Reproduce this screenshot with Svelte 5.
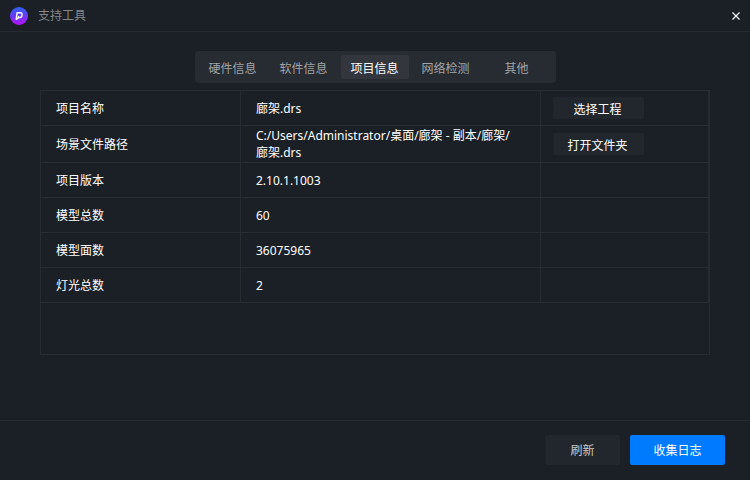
<script>
	const tabs = ["硬件信息", "软件信息", "项目信息", "网络检测", "其他"];

	const rows = [
		{ name: "项目名称", value: "廊架.drs", action: "选择工程" },
		{ name: "场景文件路径", value: "C:/Users/Administrator/桌面/廊架 - 副本/廊架/廊架.drs", action: "打开文件夹" },
		{ name: "项目版本", value: "2.10.1.1003" },
		{ name: "模型总数", value: "60" },
		{ name: "模型面数", value: "36075965" },
		{ name: "灯光总数", value: "2" }
	];

	let activeTab = $state(2);
</script>

<div class="window">
	<header>
		<svg class="logo" viewBox="0 0 18 18" aria-hidden="true">
			<defs>
				<linearGradient id="logoFill" x1="0" y1="0" x2="0" y2="1">
					<stop offset="0" stop-color="#2b62f2" />
					<stop offset="0.5" stop-color="#6a3af5" />
					<stop offset="1" stop-color="#b414fa" />
				</linearGradient>
			</defs>
			<circle cx="9" cy="9" r="9" fill="url(#logoFill)" />
			<path d="M8.6 9V10.6H10Q11.5 10.5 11.8 9L12.1 7.4Q12.2 5.9 10.7 5.8H7.1L6.2 12.3L8.4 10.8" fill="none" stroke="#fff" stroke-width="1.4" stroke-linejoin="round" />
		</svg>
		<h1>支持工具</h1>
		<button class="close" aria-label="关闭">
			<svg viewBox="0 0 8 8" aria-hidden="true">
				<path d="M.5.5l7 7M7.5.5l-7 7" fill="none" stroke="#fff" stroke-width="1.2" />
			</svg>
		</button>
	</header>

	<main>
		<div class="tabs" role="tablist">
			{#each tabs as tab, i}
				<button role="tab" aria-selected={activeTab === i} class:active={activeTab === i} onclick={() => (activeTab = i)}>{tab}</button>
			{/each}
		</div>

		<div class="panel">
			<table>
				<colgroup>
					<col class="nameCol" />
					<col class="valueCol" />
					<col />
				</colgroup>
				<tbody>
					{#each rows as row}
						<tr>
							<th scope="row">{row.name}</th>
							<td>{row.value}</td>
							<td class="action">
								{#if row.action}
									<button>{row.action}</button>
								{/if}
							</td>
						</tr>
					{/each}
				</tbody>
			</table>
		</div>
	</main>

	<footer>
		<button class="refresh">刷新</button>
		<button class="collect">收集日志</button>
	</footer>
</div>

<style>
	:global(body) {
		background: #1b1f26;
	}

	.window {
		display: flex;
		flex-direction: column;
		box-sizing: border-box;
		min-height: 100vh;
		background: #1b1f26;
		color: #fff;
		font-family: "Noto Sans", "Noto Sans CJK SC", sans-serif;
		font-size: 12px;
		line-height: 17px;
	}

	button {
		padding: 0;
		border: 0;
		border-radius: 2px;
		background: #22262d;
		color: #fff;
		font: inherit;
		cursor: pointer;
	}

	header {
		display: flex;
		align-items: center;
		gap: 10px;
		height: 31px;
		padding: 0 10px;
		border-bottom: 1px solid #272b32;
	}

	.logo {
		width: 18px;
		height: 18px;
	}

	h1 {
		flex: 1;
		margin: 0;
		color: #858789;
		font-size: 12px;
		font-weight: normal;
	}

	.close {
		display: flex;
		background: none;
	}

	.close svg {
		width: 8px;
		height: 8px;
	}

	main {
		flex: 1;
		display: flex;
		flex-direction: column;
		align-items: center;
		gap: 7px;
		padding: 19px 40px;
	}

	.tabs {
		display: flex;
		gap: 3px;
		padding: 4px 5px 4px 4px;
		border-radius: 4px;
		background: #272b32;
	}

	.tabs button {
		width: 68px;
		height: 24px;
		padding-top: 2px;
		background: none;
		color: #a2a4a7;
	}

	.tabs .active {
		background: #33363d;
		color: #fff;
	}

	.panel {
		align-self: stretch;
		min-height: 263px;
		border: 1px solid #272b32;
	}

	table {
		width: 100%;
		table-layout: fixed;
		border-collapse: separate;
		border-spacing: 0;
	}

	.nameCol {
		width: 200px;
	}

	.valueCol {
		width: 300px;
	}

	th,
	td {
		height: 34px;
		padding: 0 15px;
		border-right: 1px solid #272b32;
		border-bottom: 1px solid #272b32;
		font-weight: normal;
		text-align: left;
		word-break: keep-all;
		overflow-wrap: anywhere;
	}

	td:nth-child(2) {
		padding: 1px 15px;
		height: 32px;
	}

	.action {
		padding: 0 12px;
	}

	.action button {
		display: block;
		width: 91px;
		height: 22px;
		padding: 2px 2px 0 0;
	}

	footer {
		display: flex;
		justify-content: flex-end;
		gap: 10px;
		padding: 14px 25px 15px;
		border-top: 1px solid #272b32;
	}

	footer button {
		height: 30px;
	}

	.refresh {
		width: 75px;
		color: #c8c9cb;
	}

	.collect {
		width: 95px;
		background: #007aff;
	}
</style>
